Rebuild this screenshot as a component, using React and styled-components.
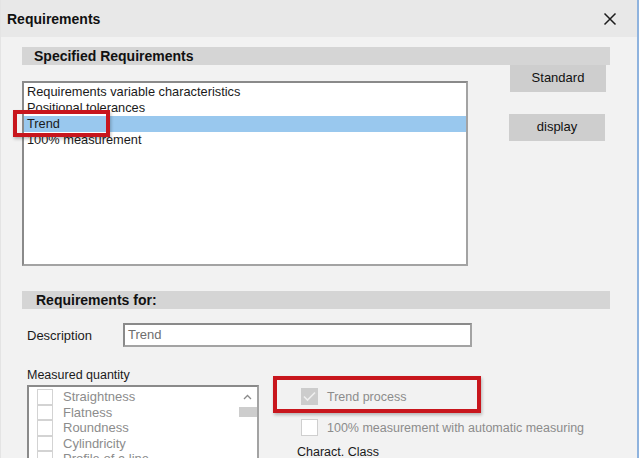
import React from 'react';
import styled, { createGlobalStyle } from 'styled-components';

const GlobalStyle = createGlobalStyle`
  html, body {
    margin: 0;
    padding: 0;
    background: #f2f2f2;
  }
  * {
    box-sizing: border-box;
  }
`;

const Window = styled.div`
  width: 639px;
  height: 458px;
  overflow: hidden;
  background: #f2f2f2;
  font-family: "Liberation Sans", Arial, sans-serif;
  font-size: 12.5px;
  color: #1a1a1a;
  border-left: 1px solid #e4e4e4;
  border-right: 2px solid #8fb3de;
  display: flex;
  flex-direction: column;
`;

const TitleBar = styled.div`
  height: 37px;
  flex: none;
  background: #e8e8e8;
  display: flex;
  align-items: center;
  justify-content: space-between;
  padding: 0 20px 0 6px;
`;

const Title = styled.div`
  font-weight: bold;
  font-size: 14px;
  color: #111;
`;

const Body = styled.div`
  padding: 10px 0 0 21px;
  display: flex;
  flex-direction: column;
`;

const SectionHeader = styled.div`
  width: 588px;
  height: 18px;
  line-height: 18px;
  background: #d5d5d5;
  padding-left: ${({ $indent }) => $indent}px;
  font-weight: bold;
  font-size: 14px;
  color: #111;
  margin-top: ${({ $top }) => $top || 0}px;
`;

const TopRow = styled.div`
  display: flex;
  align-items: flex-start;
`;

const ListWrap = styled.div`
  position: relative;
  margin-top: 16px;
  width: 446px;
  height: 185px;
`;

const ListBox = styled.div`
  width: 100%;
  height: 100%;
  background: #fff;
  border: 2px solid #a3a3a3;
  border-top-color: #8a8a8a;
  border-left-color: #8a8a8a;
  padding-top: 1px;
`;

const ListItem = styled.div`
  height: 16px;
  line-height: 16px;
  padding-left: 3px;
  font-size: 12.8px;
  white-space: nowrap;
  background: ${({ $selected }) => ($selected ? '#99c8ee' : 'transparent')};
`;

const RedMark = styled.div`
  position: absolute;
  border: 4px solid #c8161d;
  box-shadow: 1px 2px 3px rgba(0, 0, 0, 0.25);
  pointer-events: none;
`;

const ButtonColumn = styled.div`
  display: flex;
  flex-direction: column;
  margin-left: 41px;
`;

const Button = styled.div`
  width: 96px;
  height: 27px;
  line-height: 26px;
  text-align: center;
  background: #cecece;
  font-size: 13px;
  color: #111;
  margin-top: ${({ $top }) => $top || 0}px;
  margin-left: ${({ $left }) => $left || 0}px;
`;

const FieldRow = styled.div`
  display: flex;
  align-items: center;
  margin-top: 14px;
  padding-left: 5px;
`;

const FieldLabel = styled.div`
  width: 96px;
  font-size: 13px;
`;

const TextBox = styled.div`
  width: 349px;
  height: 24px;
  line-height: 20px;
  background: #fff;
  border: 2px solid #a3a3a3;
  border-top-color: #8a8a8a;
  border-left-color: #8a8a8a;
  padding-left: 3px;
  color: #6e6e6e;
  font-size: 13px;
`;

const BottomRow = styled.div`
  display: flex;
  margin-top: 21px;
  padding-left: 5px;
  gap: 14px;
`;

const LeftColumn = styled.div`
  display: flex;
  flex-direction: column;
  width: 232px;
`;

const GroupLabel = styled.div`
  height: 17px;
  line-height: 14px;
  font-size: 12.5px;
`;

const CheckList = styled.div`
  position: relative;
  height: 90px;
  background: #fff;
  border: 2px solid #a3a3a3;
  border-top-color: #8a8a8a;
  border-left-color: #8a8a8a;
  padding: 2px 0 0 8px;
`;

const CheckRow = styled.div`
  display: flex;
  align-items: center;
  height: 15.5px;
  color: #8c8c8c;
  font-size: 13px;
`;

const CellBox = styled.span`
  width: 16px;
  height: 15.5px;
  border: 1px solid #d3d3d3;
  margin-right: ${({ $gap }) => $gap}px;
  flex: none;
`;

const ScrollBar = styled.div`
  position: absolute;
  top: 0;
  right: 0;
  width: 19px;
  height: 100%;
  display: flex;
  flex-direction: column;
  align-items: center;
`;

const ScrollArrow = styled.div`
  height: 20px;
  display: flex;
  align-items: center;
  justify-content: center;
`;

const ScrollThumb = styled.div`
  width: 18px;
  height: 10px;
  background: #cdcdcd;
`;

const RightColumn = styled.div`
  position: relative;
  display: flex;
  flex-direction: column;
  padding-top: 20px;
  width: 320px;
`;

const CheckLine = styled.div`
  display: flex;
  align-items: center;
  height: 17px;
  padding-left: 28px;
  margin-bottom: ${({ $bottom }) => $bottom || 0}px;
  color: #8c8c8c;
  font-size: 12.5px;
  white-space: nowrap;
`;

const CheckBox = styled.span`
  width: 17px;
  height: 17px;
  flex: none;
  margin-right: 9px;
  display: flex;
  align-items: center;
  justify-content: center;
  background: ${({ $checked }) => ($checked ? '#cccccc' : '#fff')};
  border: 1px solid ${({ $checked }) => ($checked ? '#cccccc' : '#cfcfcf')};
`;

const PlainLabel = styled.div`
  padding-left: 24px;
  margin-top: 9px;
  font-size: 12.5px;
  color: #1a1a1a;
`;

const CloseIcon = () => (
  <svg width="14" height="14" viewBox="0 0 14 14">
    <path d="M1.5 1.5 L12.5 12.5 M12.5 1.5 L1.5 12.5" stroke="#1c1c1c" strokeWidth="1.5" fill="none" />
  </svg>
);

const CheckMark = () => (
  <svg width="13" height="11" viewBox="0 0 13 11">
    <path d="M1 5.5 L4.5 9 L12 1.5" stroke="#efefef" strokeWidth="1.6" fill="none" />
  </svg>
);

const ChevronUp = () => (
  <svg width="9" height="6" viewBox="0 0 9 6">
    <path d="M1 5 L4.5 1.5 L8 5" stroke="#8a8a8a" strokeWidth="1.3" fill="none" />
  </svg>
);

const requirements = [
  'Requirements variable characteristics',
  'Positional tolerances',
  'Trend',
  '100% measurement',
];

const quantities = ['Straightness', 'Flatness', 'Roundness', 'Cylindricity', 'Profile of a line'];

export default function App() {
  return (
    <>
      <GlobalStyle />
      <Window>
        <TitleBar>
          <Title>Requirements</Title>
          <CloseIcon />
        </TitleBar>
        <Body>
          <SectionHeader $indent={12}>Specified Requirements</SectionHeader>
          <TopRow>
            <ListWrap>
              <ListBox>
                {requirements.map((item, i) => (
                  <ListItem key={item} $selected={i === 2}>
                    {item}
                  </ListItem>
                ))}
              </ListBox>
              <RedMark style={{ left: -9, top: 29, width: 97, height: 27 }} />
            </ListWrap>
            <ButtonColumn>
              <Button $left={1}>Standard</Button>
              <Button $top={22}>display</Button>
            </ButtonColumn>
          </TopRow>

          <SectionHeader $indent={14} $top={25}>Requirements for:</SectionHeader>
          <FieldRow>
            <FieldLabel>Description</FieldLabel>
            <TextBox>Trend</TextBox>
          </FieldRow>

          <BottomRow>
            <LeftColumn>
              <GroupLabel>Measured quantity</GroupLabel>
              <CheckList>
                {quantities.map((q) => (
                  <CheckRow key={q}>
                    <CellBox $gap={10} />
                    {q}
                  </CheckRow>
                ))}
                <ScrollBar>
                  <ScrollArrow>
                    <ChevronUp />
                  </ScrollArrow>
                  <ScrollThumb />
                </ScrollBar>
              </CheckList>
            </LeftColumn>
            <RightColumn>
              <CheckLine $bottom={14}>
                <CheckBox $checked>
                  <CheckMark />
                </CheckBox>
                Trend process
              </CheckLine>
              <CheckLine>
                <CheckBox />
                100% measurement with automatic measuring
              </CheckLine>
              <PlainLabel>Charact. Class</PlainLabel>
              <RedMark style={{ left: 0, top: 8, width: 208, height: 37 }} />
            </RightColumn>
          </BottomRow>
        </Body>
      </Window>
    </>
  );
}
